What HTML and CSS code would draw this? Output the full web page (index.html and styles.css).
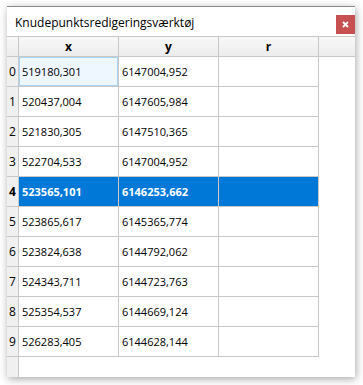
FILE: index.html
```html
<!DOCTYPE html>
<html lang="da">
<head>
    <meta charset="UTF-8">
    <title>Knudepunktsredigeringsværktøj</title>
    <link rel="stylesheet" href="styles.css">
</head>
<body>
    <div class="window">
        <div class="title-bar">
            <span class="title">Knudepunktsredigeringsværktøj</span>
            <button class="close-button">
                <svg width="7" height="7" viewBox="0 0 7 7"><path d="M1 1L6 6M6 1L1 6" stroke="#fff" stroke-width="1.8"/></svg>
            </button>
        </div>
        <!-- tabel med knudepunkter -->
        <div class="table-view">
            <div class="corner"></div>
            <div class="col-header">x</div>
            <div class="col-header">y</div>
            <div class="col-header">r</div>
            <div class="header-fill"></div>

            <div class="row-header">0</div><div class="cell current">519180,301</div><div class="cell">6147004,952</div><div class="cell"></div><div></div>
            <div class="row-header">1</div><div class="cell">520437,004</div><div class="cell">6147605,984</div><div class="cell"></div><div></div>
            <div class="row-header">2</div><div class="cell">521830,305</div><div class="cell">6147510,365</div><div class="cell"></div><div></div>
            <div class="row-header">3</div><div class="cell">522704,533</div><div class="cell">6147004,952</div><div class="cell"></div><div></div>
            <div class="row-header selected">4</div><div class="cell selected">523565,101</div><div class="cell selected">6146253,662</div><div class="cell selected"></div><div></div>
            <div class="row-header">5</div><div class="cell">523865,617</div><div class="cell">6145365,774</div><div class="cell"></div><div></div>
            <div class="row-header">6</div><div class="cell">523824,638</div><div class="cell">6144792,062</div><div class="cell"></div><div></div>
            <div class="row-header">7</div><div class="cell">524343,711</div><div class="cell">6144723,763</div><div class="cell"></div><div></div>
            <div class="row-header">8</div><div class="cell">525354,537</div><div class="cell">6144669,124</div><div class="cell"></div><div></div>
            <div class="row-header">9</div><div class="cell">526283,405</div><div class="cell">6144628,144</div><div class="cell"></div><div></div>
        </div>
    </div>
</body>
</html>
```

FILE: styles.css
```css
body {
    margin: 0;
    padding: 6px 8px 8px 7px;
    background-color: #fff;
    font-family: "Open Sans", "Liberation Sans", sans-serif;
}
.window {
    width: 348px;
    height: 371px;
    box-sizing: border-box;
    background-color: #fff;
    border-top: 1px solid #8a8a8a;
    box-shadow: 1px 2px 8px rgba(0, 0, 0, 0.35);
    display: flex;
    flex-direction: column;
}
.title-bar {
    height: 29px;
    display: flex;
    align-items: center;
    justify-content: space-between;
    border-bottom: 1px solid #c8c8c8;
}
.title {
    margin-left: 8px;
    margin-top: 2px;
    font-size: 12px;
    color: #000;
}
.close-button {
    width: 19px;
    height: 19px;
    margin-top: 5px;
    padding: 0;
    border: none;
    background-color: #c75050;
    display: flex;
    align-items: center;
    justify-content: center;
}
.table-view {
    flex: 1;
    display: grid;
    grid-template-columns: 12px 100px 100px 100px 1fr;
    grid-auto-rows: 30px;
    grid-template-rows: 20px;
    align-content: start;
    background: linear-gradient(to right, #f0f0f0 11px, #c8c8c8 11px, #c8c8c8 12px, #fff 12px);
    font-size: 11px;
    color: #000;
}
.corner, .col-header, .header-fill {
    background: linear-gradient(#f8f8f8, #ececec);
    border-bottom: 1px solid #c8c8c8;
}
.corner, .col-header {
    border-right: 1px solid #c8c8c8;
}
.col-header {
    font-weight: bold;
    font-size: 12px;
    display: flex;
    align-items: center;
    justify-content: center;
}
.row-header {
    border-right: 1px solid #c8c8c8;
    border-bottom: 1px solid #c8c8c8;
    display: flex;
    align-items: center;
    justify-content: center;
    font-size: 12px;
}
.row-header.selected {
    font-weight: bold;
}
.cell {
    border-right: 1px solid #c8c8c8;
    border-bottom: 1px solid #c8c8c8;
    display: flex;
    align-items: center;
    padding-left: 3px;
    white-space: nowrap;
}
.cell.current {
    background-color: #eef6ff;
    box-shadow: inset 0 0 0 1px #a8d4f7;
}
.cell.selected {
    background-color: #0078d7;
    color: #fff;
    font-weight: bold;
}
```
